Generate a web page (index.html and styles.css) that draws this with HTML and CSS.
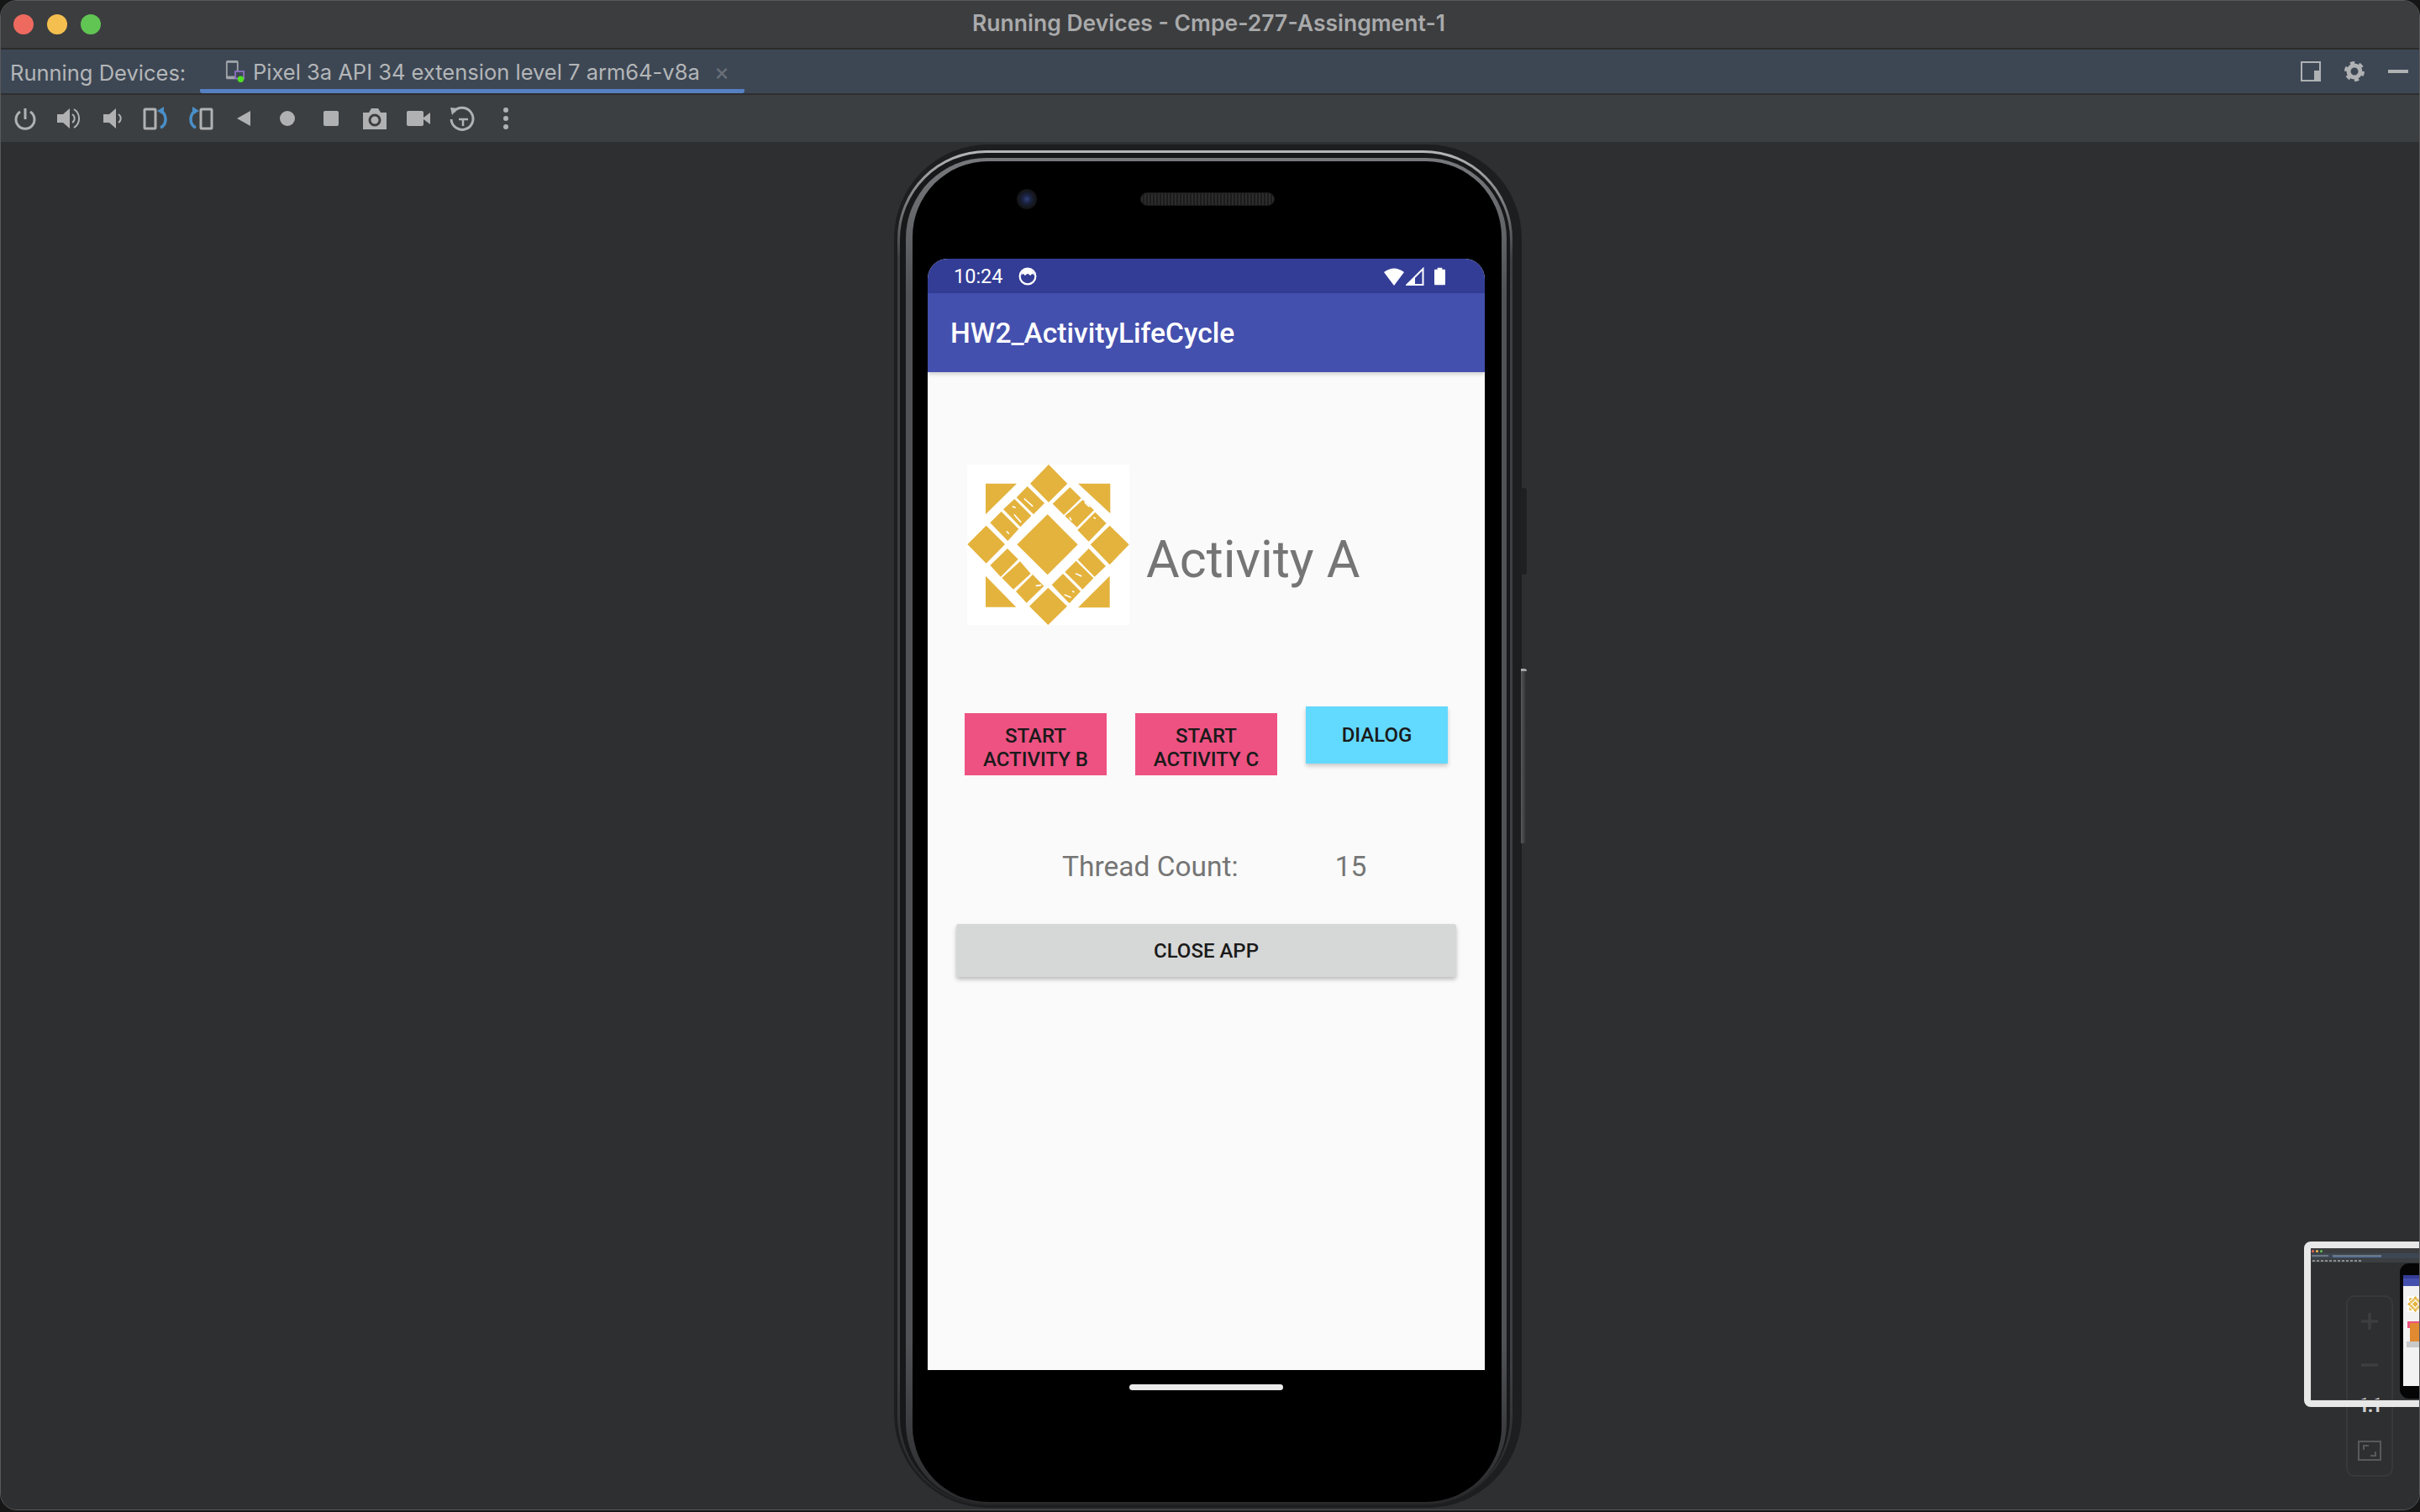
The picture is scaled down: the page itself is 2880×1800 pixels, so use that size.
FILE: index.html
```html
<!DOCTYPE html>
<html lang="en">
<head>
    <meta charset="UTF-8">
    <title>Running Devices - Cmpe-277-Assingment-1</title>
    <link rel="stylesheet" href="styles.css">
</head>
<body>
    <div class="window">
        <div class="titlebar">
            <div class="lights">
                <span class="light red"></span>
                <span class="light yellow"></span>
                <span class="light green"></span>
            </div>
            <div class="window-title">Running Devices - Cmpe-277-Assingment-1</div>
        </div>

        <div class="tabbar">
            <span class="tabbar-label">Running Devices:</span>
            <div class="tab">
                <svg class="tab-icon" viewBox="0 0 26 30">
                    <rect x="1" y="1" width="16" height="24" rx="2" fill="#9fa4a8"/>
                    <rect x="3" y="4" width="12" height="17" fill="#3d4754"/>
                    <rect x="13" y="15" width="11" height="9" fill="#3d4754" stroke="#8a6fc0" stroke-width="2"/>
                    <circle cx="20" cy="25" r="4" fill="#4fe021"/>
                </svg>
                <span>Pixel 3a API 34 extension level 7 arm64-v8a</span>
                <span class="tab-close">×</span>
            </div>
            <div class="tabbar-right">
                <svg class="bar-icon" viewBox="0 0 24 24">
                    <rect x="1" y="1" width="22" height="22" fill="none" stroke="#afb1b3" stroke-width="2"/>
                    <rect x="16" y="11" width="7" height="12" fill="#afb1b3"/>
                </svg>
                <svg class="bar-icon" viewBox="0 0 24 24">
                    <circle cx="12" cy="12" r="10" fill="none" stroke="#afb1b3" stroke-width="4" stroke-dasharray="5.2 5.27"/>
                    <circle cx="12" cy="12" r="7" fill="none" stroke="#afb1b3" stroke-width="5"/>
                </svg>
                <svg class="bar-icon" viewBox="0 0 24 24">
                    <rect x="0" y="10" width="24" height="4" fill="#afb1b3"/>
                </svg>
            </div>
        </div>

        <div class="toolbar">
            <svg class="tool" viewBox="0 0 32 32">
                <path d="M10 8a11 11 0 1 0 12 0" fill="none" stroke="#afb1b3" stroke-width="3"/>
                <path d="M16 4v13" stroke="#afb1b3" stroke-width="3"/>
            </svg>
            <svg class="tool" viewBox="0 0 32 32">
                <path d="M2 11h7l8-7v24l-8-7H2z" fill="#afb1b3"/>
                <path d="M20 11a6 6 0 0 1 0 10M22 5a13 13 0 0 1 0 22" fill="none" stroke="#afb1b3" stroke-width="2"/>
            </svg>
            <svg class="tool" viewBox="0 0 32 32">
                <path d="M5 11h7l8-7v24l-8-7H5z" fill="#afb1b3"/>
                <path d="M23 11a6 6 0 0 1 0 10" fill="none" stroke="#afb1b3" stroke-width="2"/>
            </svg>
            <svg class="tool" viewBox="0 0 32 32">
                <rect x="2" y="5" width="13" height="23" rx="1" fill="none" stroke="#afb1b3" stroke-width="3"/>
                <path d="M21 7c8 4 8 16 0 20" fill="none" stroke="#4a8fc9" stroke-width="3.5"/>
                <path d="M25 2v10l-8-5z" fill="#4a8fc9"/>
            </svg>
            <svg class="tool" viewBox="0 0 32 32">
                <rect x="17" y="5" width="13" height="23" rx="1" fill="none" stroke="#afb1b3" stroke-width="3"/>
                <path d="M11 7c-8 4-8 16 0 20" fill="none" stroke="#4a8fc9" stroke-width="3.5"/>
                <path d="M7 2v10l8-5z" fill="#4a8fc9"/>
            </svg>
            <svg class="tool" viewBox="0 0 32 32"><path d="M24 7v18L8 16z" fill="#afb1b3"/></svg>
            <svg class="tool" viewBox="0 0 32 32"><circle cx="16" cy="16" r="9" fill="#afb1b3"/></svg>
            <svg class="tool" viewBox="0 0 32 32"><rect x="7" y="7" width="18" height="18" rx="2" fill="#afb1b3"/></svg>
            <svg class="tool" viewBox="0 0 32 32">
                <path d="M2 9h7l3-5h8l3 5h7v20H2z" fill="#afb1b3"/>
                <circle cx="16" cy="18" r="6" fill="none" stroke="#3c3f41" stroke-width="3"/>
            </svg>
            <svg class="tool" viewBox="0 0 32 32">
                <rect x="2" y="7" width="20" height="18" rx="2" fill="#afb1b3"/>
                <path d="M22 15l8-6v14l-8-6z" fill="#afb1b3"/>
            </svg>
            <svg class="tool" viewBox="0 0 32 32">
                <path d="M6 8a13 13 0 1 1-3 9" fill="none" stroke="#afb1b3" stroke-width="3"/>
                <path d="M2 3l9 1-7 8z" fill="#afb1b3"/>
                <path d="M12 17h11M17 17v8" stroke="#afb1b3" stroke-width="2.5"/>
            </svg>
            <svg class="tool" viewBox="0 0 32 32">
                <circle cx="16" cy="6" r="3" fill="#afb1b3"/>
                <circle cx="16" cy="16" r="3" fill="#afb1b3"/>
                <circle cx="16" cy="26" r="3" fill="#afb1b3"/>
            </svg>
        </div>

        <div class="canvas">
            <div class="phone">
                <span class="side-btn volume"></span>
                <span class="side-btn power"></span>
                <div class="phone-ring">
                    <div class="phone-gap">
                        <div class="phone-edge">
                            <div class="phone-face">
                                <div class="phone-top">
                                    <span class="camera"></span>
                                    <span class="speaker"></span>
                                </div>
                                <div class="screen">
                                    <div class="statusbar">
                                        <span class="clock">10:24</span>
                                        <svg class="face-icon" viewBox="0 0 20 20">
                                            <circle cx="10" cy="10" r="8.5" fill="none" stroke="#fff" stroke-width="2"/>
                                            <path d="M3 9a7 7 0 0 1 14 0l-2-2-2 2-3-2-3 2-2-2z" fill="#fff"/>
                                        </svg>
                                        <div class="status-right">
                                            <svg class="wifi" viewBox="0 0 26 22"><path d="M1 6Q13-3 25 6L13 22z" fill="#fff"/></svg>
                                            <svg class="signal" viewBox="0 0 22 22">
                                                <path d="M20.5 2v19h-19z" fill="none" stroke="#fff" stroke-width="2"/>
                                                <path d="M2 21l9-9v9z" fill="#fff"/>
                                            </svg>
                                            <svg class="battery" viewBox="0 0 14 22"><path d="M4 0h6v2h3a1 1 0 0 1 1 1v18a1 1 0 0 1-1 1H1a1 1 0 0 1-1-1V3a1 1 0 0 1 1-1h3z" fill="#fff"/></svg>
                                        </div>
                                    </div>
                                    <div class="appbar">HW2_ActivityLifeCycle</div>
                                    <div class="content">
                                        <div class="header-row">
                                            <svg class="logo" viewBox="63 72 579 573">
                                                <g id="logo-art">
                                                    <rect x="63" y="72" width="579" height="573" fill="#fff"/>
                                                    <g fill="#e4b33d">
                                                        <path d="M350 250L458 358 350 466 241 358z"/>
                                                        <path d="M354 72L421 140 354 207 288 140z"/>
                                                        <path d="M352 512L420 578 352 645 285 578z"/>
                                                        <path d="M131 290L198 357 131 425 64 357z"/>
                                                        <path d="M572 290L641 358 572 430 503 358z"/>
                                                        <path d="M129 140H240L129 250z"/>
                                                        <path d="M459 140H574V247z"/>
                                                        <path d="M129 470L238 581H129z"/>
                                                        <path d="M572 470V583H459z"/>
                                                        <path d="M278 150L339 210 300 250 239 190z"/>
                                                        <path d="M232 195L292 255 253 295 192 232z"/>
                                                        <path d="M185 240L247 302 208 345 145 280z"/>
                                                        <path d="M430 153L470 192 408 252 368 212z"/>
                                                        <path d="M476 198L516 235 455 296 412 256z"/>
                                                        <path d="M520 242L560 282 497 347 457 306z"/>
                                                        <path d="M497 372L558 435 518 473 458 412z"/>
                                                        <path d="M452 416L514 478 475 518 412 456z"/>
                                                        <path d="M405 462L468 525 428 568 365 502z"/>
                                                        <path d="M207 372L245 410 183 473 145 432z"/>
                                                        <path d="M252 418L290 462 228 518 187 477z"/>
                                                        <path d="M297 465L337 506 275 566 237 525z"/>
                                                    </g>
                                                    <g fill="none" stroke="#fff" stroke-width="5" stroke-linecap="round">
                                                        <path d="M268 195l28 25M232 252l22 25M226 222l8 4"/>
                                                        <path d="M484 208l14 14M430 262l4 8M516 262l4 2"/>
                                                        <path d="M412 538l20 8M440 525l4 2M452 462l18 8"/>
                                                        <path d="M310 505l16-2M205 312l6 6"/>
                                                    </g>
                                                </g>
                                            </svg>
                                            <span class="activity-title">Activity A</span>
                                        </div>
                                        <div class="btn-row">
                                            <div class="btn pink">START<br>ACTIVITY B</div>
                                            <div class="btn pink">START<br>ACTIVITY C</div>
                                            <div class="btn cyan">DIALOG</div>
                                        </div>
                                        <div class="thread-row">
                                            <span>Thread Count:</span>
                                            <span>15</span>
                                        </div>
                                        <div class="btn close-btn">CLOSE APP</div>
                                    </div>
                                </div>
                                <div class="home-area"><span class="home-bar"></span></div>
                            </div>
                        </div>
                    </div>
                </div>
            </div>
        </div>

        <!-- zoom controls, the preview sits on top of them -->
        <div class="zoom-controls">
            <svg class="zoom-sign" viewBox="0 0 20 20"><path d="M0 10h20M10 0v20" stroke="#3d3e40" stroke-width="3.5"/></svg>
            <svg class="zoom-sign minus" viewBox="0 0 20 20"><path d="M0 10h20" stroke="#3d3e40" stroke-width="3.5"/></svg>
            <span class="zoom-one">1:1</span>
            <svg class="zoom-fit" viewBox="0 0 28 24">
                <rect x="1" y="1" width="26" height="22" fill="none" stroke="#59595b" stroke-width="2"/>
                <path d="M7 11V6h6M21 13v5h-6" fill="none" stroke="#59595b" stroke-width="2"/>
            </svg>
        </div>

        <div class="preview">
            <div class="mini-title">
                <i class="mini-dot r"></i><i class="mini-dot y"></i><i class="mini-dot g"></i>
            </div>
            <div class="mini-tabs"><i class="mini-text"></i><i class="mini-text long"></i></div>
            <div class="mini-tools"><i class="mini-text tools"></i></div>
            <div class="mini-canvas">
                <div class="mini-phone">
                    <div class="mini-screen">
                        <div class="mini-status"></div>
                        <div class="mini-app"></div>
                        <svg class="mini-logo" viewBox="63 72 579 573"><use href="#logo-art"/></svg>
                        <div class="mini-pink"></div>
                        <div class="mini-orange"></div>
                        <div class="mini-close"></div>
                    </div>
                </div>
            </div>
        </div>
    </div>
</body>
</html>
```

FILE: styles.css
```css
* {
    box-sizing: border-box;
}
html, body {
    margin: 0;
    padding: 0;
    background: #161616;
}
body {
    width: 2880px;
    height: 1800px;
    overflow: hidden;
    font-family: Inter, "Liberation Sans", sans-serif;
}
.window {
    position: relative;
    width: 2880px;
    height: 1798px;
    overflow: hidden;
    border-radius: 20px;
    border: 1px solid #58595b;
    background: #2d2f31;
    display: flex;
    flex-direction: column;
}

/* title bar */
.titlebar {
    height: 58px;
    flex: none;
    display: flex;
    align-items: center;
    background: #3c3d3f;
    border-bottom: 2px solid #2c2c2d;
    position: relative;
}
.lights {
    display: flex;
    gap: 16px;
    padding-left: 15px;
}
.light {
    width: 24px;
    height: 24px;
    border-radius: 50%;
}
.red { background: #ee6a5f; }
.yellow { background: #f5bf4f; }
.green { background: #61c554; }
.window-title {
    flex: 1;
    margin-right: 122px;
    padding-bottom: 4px;
    text-align: center;
    color: #a9aaab;
    font-size: 26.5px;
    font-weight: 600;
}

/* tool window tabs */
.tabbar {
    height: 54px;
    flex: none;
    display: flex;
    align-items: center;
    padding-left: 11px;
    background: #3d4754;
    border-bottom: 2px solid #2e2e2f;
    color: #b4b6b8;
    font-size: 25.5px;
}
.tabbar-label {
    width: 226px;
    flex: none;
    padding-top: 2px;
}
.tab {
    height: 52px;
    width: 648px;
    flex: none;
    display: flex;
    align-items: center;
    padding: 5px 0 0 30px;
    gap: 9px;
    border-bottom: 5px solid #5581c3;
    border-radius: 0 0 3px 3px;
}
.tab-icon {
    width: 24px;
    height: 28px;
    flex: none;
}
.tab-close {
    margin-left: 8px;
    color: #6a7078;
    font-size: 28px;
}
.tabbar-right {
    margin-left: auto;
    display: flex;
    gap: 28px;
    padding-right: 13px;
}
.bar-icon {
    width: 24px;
    height: 24px;
}

/* device toolbar */
.toolbar {
    height: 56px;
    flex: none;
    display: flex;
    align-items: center;
    gap: 20px;
    padding-left: 13px;
    background: #3c3f41;
}
.tool {
    width: 32px;
    height: 32px;
    flex: none;
}

/* device frame */
.canvas {
    flex: 1;
    padding: 3px 0 0 1063px;
    background: #2d2f31;
}
.phone {
    position: relative;
    width: 747px;
    height: 1623px;
    padding: 7px 11px 3px 4px;
    border-radius: 112px;
    background: #1d1e1f;
}
.side-btn {
    position: absolute;
    left: 746px;
    width: 7px;
    border-radius: 0 3px 3px 0;
}
.volume {
    top: 409px;
    height: 103px;
    background: #1f2021;
}
.power {
    top: 624px;
    height: 208px;
    background: linear-gradient(to right, #58595b, #2a2b2c);
    border-top: 3px solid #a8a8a8;
}
.phone-ring {
    height: 100%;
    padding: 3px 3px 2px;
    border-radius: 106px;
    background: linear-gradient(to bottom, #b5b7ba, #3e3f42 8%, #3e3f42 90%, #242425);
}
.phone-gap {
    height: 100%;
    padding: 6px 4px 0 7px;
    border-radius: 103px;
    background: #17181a;
}
.phone-edge {
    height: 100%;
    padding: 4px 6px 2px 8px;
    border-radius: 96px;
    background: linear-gradient(to bottom, #77797d, #505256 10%, #505256 88%, #2a2a2c);
}
.phone-face {
    height: 100%;
    padding: 0 21px 0 18px;
    border-radius: 90px;
    background: #000;
    display: flex;
    flex-direction: column;
}
.phone-top {
    height: 116px;
    flex: none;
    padding-top: 33px;
    padding-left: 106px;
    display: flex;
    align-items: flex-start;
    gap: 123px;
}
.camera {
    width: 24px;
    height: 24px;
    margin-top: 0;
    border-radius: 50%;
    background: radial-gradient(circle, #2f3f78 0, #1a2240 30%, #15161a 60%, #111 100%);
}
.speaker {
    width: 160px;
    height: 16px;
    margin-top: 4px;
    border-radius: 8px;
    border: 1px solid #1a1a1a;
    background: repeating-linear-gradient(90deg, #2c2c2c 0 2px, #1c1c1c 2px 4px);
}

/* android screen */
.screen {
    width: 663px;
    height: 1323px;
    flex: none;
    overflow: hidden;
    border-radius: 24px 24px 0 0;
    background: #fafafa;
    display: flex;
    flex-direction: column;
    font-family: Roboto, sans-serif;
}
.statusbar {
    height: 41px;
    flex: none;
    display: flex;
    align-items: center;
    padding: 0 47px 0 31px;
    background: #333d96;
    color: #fff;
    font-size: 23.5px;
}
.face-icon {
    width: 22px;
    height: 22px;
    margin-left: 18px;
}
.status-right {
    margin-left: auto;
    display: flex;
    align-items: center;
}
.wifi {
    width: 26px;
    height: 22px;
}
.signal {
    width: 22px;
    height: 22px;
    margin-left: 1px;
}
.battery {
    width: 13px;
    height: 22px;
    margin-left: 12px;
}
.appbar {
    height: 94px;
    flex: none;
    display: flex;
    align-items: center;
    padding-left: 27px;
    background: #4450ae;
    color: #fff;
    font-size: 33.6px;
    font-weight: 500;
    box-shadow: 0 2px 5px rgba(0, 0, 0, 0.2);
    position: relative;
}
.content {
    flex: 1;
}
.header-row {
    display: flex;
    align-items: center;
    gap: 20px;
    padding: 109px 0 0 47px;
}
.logo {
    width: 193px;
    height: 193px;
    flex: none;
}
.activity-title {
    margin-top: 34px;
    color: #757575;
    font-size: 61px;
}
.btn-row {
    display: flex;
    align-items: flex-start;
    gap: 34px;
    margin-top: 96px;
    padding-left: 44px;
}
.btn {
    display: flex;
    align-items: center;
    justify-content: center;
    text-align: center;
    color: #1a1a1a;
    font-size: 24px;
    font-weight: 500;
    line-height: 28px;
}
.pink {
    width: 169px;
    height: 74px;
    margin-top: 8px;
    padding-top: 8px;
    background: #ed5282;
}
.cyan {
    width: 169px;
    height: 68px;
    background: #62d9fe;
    box-shadow: 0 3px 5px rgba(0, 0, 0, 0.2);
}
.thread-row {
    display: flex;
    margin-top: 89px;
    padding-left: 160px;
    gap: 115px;
    height: 40px;
    line-height: 40px;
    color: #757575;
    font-size: 33.5px;
}
.close-btn {
    width: 595px;
    height: 63px;
    margin: 48px 0 0 34px;
    border-radius: 3px;
    background: #d6d7d7;
    box-shadow: 0 3px 5px rgba(0, 0, 0, 0.25);
}
.home-area {
    padding-top: 17px;
    display: flex;
    justify-content: center;
}
.home-bar {
    width: 183px;
    height: 7px;
    border-radius: 4px;
    background: #ebebeb;
}

/* zoom buttons */
.zoom-controls {
    position: absolute;
    left: 2791px;
    top: 1541px;
    width: 56px;
    height: 216px;
    border: 2px solid #39393b;
    border-radius: 10px;
    display: flex;
    flex-direction: column;
    align-items: center;
}
.zoom-sign {
    width: 20px;
    height: 20px;
    margin-top: 19px;
}
.zoom-sign.minus {
    margin-top: 32px;
}
.zoom-one {
    margin-top: 26px;
    color: #d0d0d0;
    font-family: Roboto, sans-serif;
    font-size: 23px;
    font-weight: 700;
    letter-spacing: -2px;
    line-height: 26px;
}
.zoom-fit {
    width: 28px;
    height: 24px;
    margin-top: 28px;
}

/* minimap preview */
.preview {
    position: absolute;
    left: 2741px;
    top: 1477px;
    width: 310px;
    height: 197px;
    border: 8px solid #e8e8e8;
    border-radius: 8px;
    outline: 1px solid #3a3a3a;
    outline-offset: -9px;
    display: flex;
    flex-direction: column;
}
.mini-title {
    height: 6px;
    flex: none;
    display: flex;
    gap: 2px;
    align-items: center;
    padding-left: 1px;
    background: #3c3d3f;
}
.mini-dot {
    width: 3px;
    height: 3px;
    border-radius: 50%;
}
.mini-dot.r { background: #ee6a5f; }
.mini-dot.y { background: #f5bf4f; }
.mini-dot.g { background: #61c554; }
.mini-tabs {
    height: 6px;
    flex: none;
    display: flex;
    align-items: center;
    gap: 5px;
    padding-left: 1px;
    background: #3d4754;
}
.mini-text {
    width: 20px;
    height: 2px;
    background: #6f7780;
}
.mini-text.long {
    width: 58px;
    box-shadow: 0 1px 0 #4c6c9c;
}
.mini-tools {
    height: 5px;
    flex: none;
    display: flex;
    align-items: center;
    padding-left: 2px;
    background: #3c3f41;
}
.mini-text.tools {
    width: 58px;
    background: repeating-linear-gradient(90deg, #8c8e90 0 3px, transparent 3px 5px);
}
.mini-canvas {
    flex: 1;
    padding: 1px 0 0 106px;
}
.mini-phone {
    width: 75px;
    height: 161px;
    padding: 14px 3px 15px 4px;
    border-radius: 11px;
    background: #050505;
}
.mini-screen {
    height: 132px;
    background: #f2f2f2;
    overflow: hidden;
}
.mini-status {
    height: 4px;
    background: #333d96;
}
.mini-app {
    height: 9px;
    background: #4450ae;
}
.mini-logo {
    display: block;
    width: 19px;
    height: 19px;
    margin: 12px 0 0 5px;
}
.mini-pink {
    width: 17px;
    height: 8px;
    margin: 11px 0 0 5px;
    background: #ed5282;
}
.mini-orange {
    width: 40px;
    height: 22px;
    margin: -6px 0 0 8px;
    position: relative;
    background: #e18a32;
}
.mini-close {
    width: 60px;
    height: 7px;
    margin-left: 4px;
    background: #c9c9c9;
}
```
